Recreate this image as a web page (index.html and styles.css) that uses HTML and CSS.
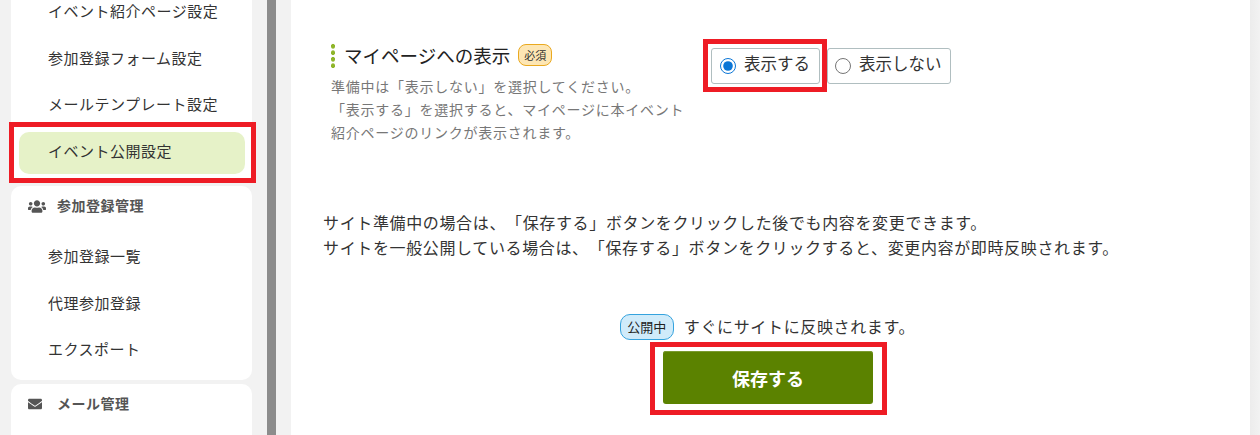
FILE: index.html
```html
<!DOCTYPE html>
<html lang="ja">
  <head>
    <meta charset="UTF-8" />
    <meta name="viewport" content="width=device-width, initial-scale=1.0" />
    <title>イベント公開設定</title>
    <link rel="stylesheet" href="styles.css">
  </head>
  <body>
    <div class="page">
      <nav class="sidebar">
        <div class="card card-first">
          <a class="menu-item">イベント紹介ページ設定</a>
          <a class="menu-item">参加登録フォーム設定</a>
          <a class="menu-item">メールテンプレート設定</a>
          <a class="menu-item active">イベント公開設定<span class="mark mark-menu"></span></a>
        </div>
        <div class="card card-entry">
          <h3 class="menu-title">
            <svg class="menu-icon" viewBox="0 0 640 512"><path d="M96 224c35.3 0 64-28.7 64-64s-28.7-64-64-64-64 28.7-64 64 28.7 64 64 64zm448 0c35.3 0 64-28.7 64-64s-28.7-64-64-64-64 28.7-64 64 28.7 64 64 64zm32 32h-64c-17.6 0-33.5 7.1-45.1 18.6 40.3 22.1 68.9 62 75.1 109.4h66c17.7 0 32-14.3 32-32v-32c0-35.3-28.7-64-64-64zm-256 0c61.9 0 112-50.1 112-112S381.9 32 320 32 208 82.1 208 144s50.1 112 112 112zm76.8 32h-8.3c-20.8 10-43.9 16-68.5 16s-47.6-6-68.5-16h-8.3C179.6 288 128 339.6 128 403.2V432c0 26.5 21.5 48 48 48h288c26.5 0 48-21.5 48-48v-28.8c0-63.6-51.6-115.2-115.2-115.2zm-223.7-13.4C161.5 263.1 145.6 256 128 256H64c-35.3 0-64 28.7-64 64v32c0 17.7 14.3 32 32 32h65.9c6.3-47.4 34.9-87.3 75.2-109.4z"/></svg>
            参加登録管理
          </h3>
          <a class="menu-item">参加登録一覧</a>
          <a class="menu-item">代理参加登録</a>
          <a class="menu-item">エクスポート</a>
        </div>
        <div class="card card-mail">
          <h3 class="menu-title">
            <svg class="menu-icon" viewBox="0 0 512 512"><path d="M502.3 190.8c3.9-3.1 9.7-.2 9.7 4.7V400c0 26.5-21.5 48-48 48H48c-26.5 0-48-21.5-48-48V195.6c0-5 5.7-7.8 9.7-4.7 22.4 17.4 52.1 39.5 154.1 113.6 21.1 15.4 56.7 47.8 92.2 47.6 35.7.3 72-32.8 92.3-47.6 102-74.1 131.6-96.3 154-113.7zM256 320c23.2.4 56.6-29.2 73.4-41.4 132.7-96.3 142.8-104.7 173.4-128.7 5.8-4.5 9.2-11.5 9.2-18.9v-19c0-26.5-21.5-48-48-48H48C21.5 64 0 85.5 0 112v19c0 7.4 3.4 14.3 9.2 18.9 30.6 23.9 40.7 32.4 173.4 128.7 16.8 12.2 50.2 41.8 73.4 41.4z"/></svg>
            メール管理
          </h3>
        </div>
      </nav>
      <div class="splitter"></div>
      <main class="content">
        <div class="setting-row">
          <div class="setting-info">
            <div class="setting-title">
              <span class="dots"></span>
              <span>マイページへの表示</span>
              <span class="badge-required">必須</span>
            </div>
            <p class="setting-note">準備中は「表示しない」を選択してください。<br>「表示する」を選択すると、マイページに本イベント<br>紹介ページのリンクが表示されます。</p>
          </div>
          <div class="radio-group">
            <label class="radio-box"><input type="radio" name="mypage" checked>表示する<span class="mark mark-radio"></span></label>
            <label class="radio-box"><input type="radio" name="mypage">表示しない</label>
          </div>
        </div>
        <p class="notice">サイト準備中の場合は、「保存する」ボタンをクリックした後でも内容を変更できます。<br>サイトを一般公開している場合は、「保存する」ボタンをクリックすると、変更内容が即時反映されます。</p>
        <div class="status-line">
          <span class="badge-status">公開中</span>
          <span class="status-text">すぐにサイトに反映されます。</span>
        </div>
        <div class="save-wrap">
          <button class="save-button">保存する<span class="mark mark-save"></span></button>
        </div>
      </main>
      <div class="edge"></div>
    </div>
  </body>
</html>
```

FILE: styles.css
```css
html,
body {
  margin: 0;
  padding: 0;
  height: 100%;
  overflow: hidden;
}
body {
  font-family: "Noto Sans CJK JP", "Noto Sans", sans-serif;
  text-spacing-trim: space-all;
  color: #333;
  background: #f2f2f2;
}
.page {
  display: flex;
  height: 435px;
}
.sidebar {
  width: 241px;
  margin-left: 11px;
  flex-shrink: 0;
  display: flex;
  flex-direction: column;
  gap: 4px;
}
.card {
  background: white;
  border-radius: 10px;
  box-sizing: border-box;
}
.card-first {
  height: 195px;
  margin-top: -12px;
  margin-bottom: -1px;
  padding: 0 7px 0 8px;
  border-radius: 0 0 10px 10px;
}
.card-entry {
  height: 194px;
  padding: 0 7px 0 8px;
}
.card-mail {
  flex: 1;
  border-radius: 10px 10px 0 0;
  padding: 0 7px 0 8px;
}
.menu-item {
  display: block;
  position: relative;
  height: 46.5px;
  line-height: 46.5px;
  padding-left: 29px;
  font-size: 15px;
  letter-spacing: 0.5px;
  color: #333;
  white-space: nowrap;
}
.menu-item.active {
  height: 42px;
  line-height: 37px;
  margin-top: 4.5px;
  background: #e6f2c8;
  border-radius: 10px;
}
.menu-title {
  display: flex;
  align-items: center;
  height: 38px;
  margin: 0 0 9px;
  padding-left: 9px;
  font-size: 14px;
  letter-spacing: 0.5px;
  font-weight: bold;
  color: #555;
}
.menu-icon {
  width: 18px;
  height: 15px;
  margin-top: 2px;
  margin-right: 11px;
  fill: #555;
}
.card-mail .menu-icon {
  width: 14px;
  height: 14px;
  margin-right: 15px;
}
.splitter {
  width: 9px;
  margin-left: 15px;
  flex-shrink: 0;
  background: #8c8c8c;
}
.content {
  width: 959px;
  margin-left: 15px;
  flex-shrink: 0;
  box-sizing: border-box;
  padding: 42px 0 0 32px;
  background: white;
}
.edge {
  flex: 1;
  background: linear-gradient(to right, #ececec, #f2f2f2);
}
.setting-row {
  display: flex;
  margin-left: 8px;
}
.setting-info {
  width: 380px;
  flex-shrink: 0;
}
.setting-title {
  display: flex;
  align-items: center;
  height: 26px;
  font-size: 18.5px;
  color: #222;
  white-space: nowrap;
}
.dots {
  width: 4px;
  height: 25px;
  margin-right: 9px;
  background: radial-gradient(circle, #8fb52a 2px, transparent 2.5px) 0 0 / 4px 6.5px repeat-y;
}
.badge-required {
  margin-left: 8px;
  width: 34px;
  height: 22px;
  line-height: 20px;
  box-sizing: border-box;
  text-align: center;
  font-size: 11px;
  color: #333;
  background: #fde6b4;
  border: 1px solid #eaa91f;
  border-radius: 8px;
}
.setting-note {
  margin: 7px 0 0;
  font-size: 14px;
  letter-spacing: 0.75px;
  line-height: 23px;
  color: #777;
  white-space: nowrap;
}
.radio-group {
  display: flex;
  gap: 7px;
  margin-top: 6px;
  align-self: flex-start;
}
.radio-box {
  position: relative;
  display: flex;
  align-items: center;
  height: 36px;
  box-sizing: border-box;
  padding: 0 9px 6px 8px;
  font-size: 16.5px;
  color: #333;
  border: 1px solid #b0bec0;
  border-radius: 3px;
  white-space: nowrap;
}
.radio-box + .radio-box {
  padding-left: 7px;
  padding-right: 8px;
}
.radio-box input {
  width: 16px;
  height: 16px;
  margin: 6px 8px 0 0;
  accent-color: #0b76d6;
}
.notice {
  margin: 66px 0 0;
  font-size: 16px;
  letter-spacing: 0.64px;
  line-height: 25px;
  color: #333;
  white-space: nowrap;
}
.status-line {
  display: flex;
  align-items: center;
  justify-content: center;
  gap: 10px;
  margin-top: 54px;
  margin-right: 38px;
  height: 26px;
  font-size: 16px;
  letter-spacing: 0.64px;
}
.status-text {
  margin-top: -2px;
}
.badge-status {
  width: 54px;
  height: 26px;
  line-height: 24px;
  box-sizing: border-box;
  text-align: center;
  font-size: 13px;
  letter-spacing: 0;
  color: #222;
  background: #d0ebfa;
  border: 1px solid #35a3de;
  border-radius: 10px;
}
.save-wrap {
  display: flex;
  margin-top: 11px;
  margin-left: 340px;
}
.save-button {
  position: relative;
  width: 210px;
  height: 53px;
  font-family: inherit;
  font-size: 18px;
  font-weight: bold;
  color: white;
  background: #5b8200;
  border: none;
  border-radius: 3px;
  box-shadow: inset 0 1px 0 #7a9a30;
}
/* red annotation frames drawn over the screenshot */
.mark {
  position: absolute;
  border: 5px solid #ee1c25;
  pointer-events: none;
}
.mark-menu {
  top: -10px;
  left: -10px;
  right: -11px;
  bottom: -9px;
}
.mark-radio {
  top: -10px;
  left: -9px;
  right: -8px;
  bottom: -9px;
}
.mark-save {
  top: -9px;
  left: -13px;
  right: -14px;
  bottom: -11px;
}
```
